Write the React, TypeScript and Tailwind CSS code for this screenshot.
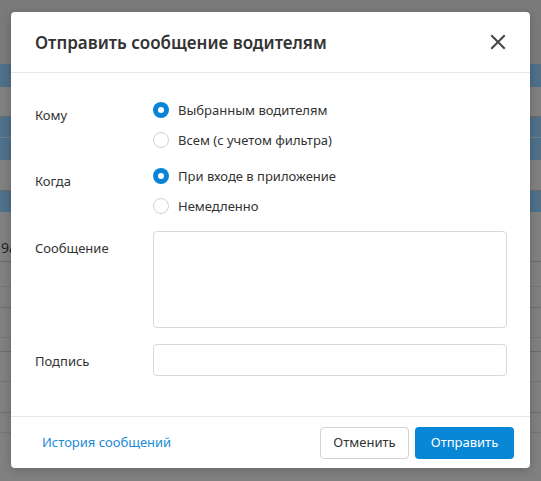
import React from "react";

function Radio({ checked, label }: { checked: boolean; label: string }) {
  return (
    <label className="flex h-5 items-center gap-[9px] text-[13px] leading-5 text-[#333]">
      {checked ? (
        <span className="flex h-4 w-4 items-center justify-center rounded-full bg-[#0a84d6]">
          <span className="h-[6px] w-[6px] rounded-full bg-white" />
        </span>
      ) : (
        <span className="h-4 w-4 rounded-full border border-[#d2d2d2] bg-white" />
      )}
      <span>{label}</span>
    </label>
  );
}

export default function App() {
  return (
    <div
      className="relative h-[481px] w-[541px] overflow-hidden bg-[#808080]"
      style={{ fontFamily: '"Noto Sans", "Open Sans", sans-serif' }}
    >
      {/* dimmed background app */}
      <div className="flex flex-col">
        <div className="h-[64px] bg-[#7a7a7a]" />
        <div className="h-[23px] bg-[#4e7089]" />
        <div className="h-[30px] border-b border-[#6c6c6c] bg-[#808080]" />
        <div className="h-[21px] border-b border-[#6f7f8a] bg-[#4e7089]" />
        <div className="h-[22px] bg-[#4e7089]" />
        <div className="h-[31px] border-b border-[#6c6c6c] bg-[#808080]" />
        <div className="h-[21px] bg-[#4e7089]" />
        <div className="flex h-[50px] items-end border-b border-[#6c6c6c] pb-[3px] text-[14px] text-[#222]">
          <span className="pl-[1px]">9a</span>
        </div>
        <div className="h-[25px] border-b border-[#747474]" />
        <div className="h-[21px] border-b border-[#6c6c6c]" />
        <div className="h-[30px] border-b border-[#747474]" />
        <div className="h-[14px] border-b border-[#6c6c6c]" />
        <div className="h-[30px] border-b border-[#747474]" />
        <div className="h-[31px] border-b border-[#6c6c6c]" />
        <div className="h-[20px] border-b border-[#747474]" />
        <div className="flex h-[30px] items-start">
          <div className="h-full w-[380px] border-r border-[#6c6c6c]" />
          <span className="ml-[17px] mt-[2px] text-[15px] leading-5 text-[#222]">11 минут назад</span>
        </div>
      </div>

      {/* modal */}
      <div className="absolute left-[11px] top-[12px] flex h-[456px] w-[519px] flex-col rounded-[4px] bg-white shadow-[0_2px_10px_rgba(0,0,0,0.2)]">
        <div className="flex h-[61px] items-center justify-between border-b border-[#e8e8e8] pl-6 pr-[20px]">
          <h2 className="pt-[1px] text-[17px] font-semibold leading-6 text-[#333]">
            Отправить сообщение водителям
          </h2>
          <button className="flex h-6 w-6 items-center justify-center text-[#444]" aria-label="close">
            <svg width="16" height="16" viewBox="0 0 16 16" fill="none" stroke="currentColor" strokeWidth="2" strokeLinecap="square">
              <path d="M2 2 L14 14 M14 2 L2 14" />
            </svg>
          </button>
        </div>

        <div className="flex flex-1 flex-col pl-6 pr-[23px] pt-[27px]">
          <div className="flex">
            <div className="w-[118px] pt-[5px] text-[13px] leading-5 text-[#333]">Кому</div>
            <div className="flex flex-col gap-[10px]">
              <Radio checked label="Выбранным водителям" />
              <Radio checked={false} label="Всем (с учетом фильтра)" />
            </div>
          </div>
          <div className="mt-[16px] flex">
            <div className="w-[118px] pt-[5px] text-[13px] leading-5 text-[#333]">Когда</div>
            <div className="flex flex-col gap-[10px]">
              <Radio checked label="При входе в приложение" />
              <Radio checked={false} label="Немедленно" />
            </div>
          </div>
          <div className="mt-[15px] flex">
            <div className="w-[118px] shrink-0 pt-[7px] text-[13px] leading-5 text-[#333]">Сообщение</div>
            <textarea className="h-[97px] flex-1 resize-none rounded-[4px] border border-[#d9d9d9] outline-none" />
          </div>
          <div className="mt-[16px] flex">
            <div className="w-[118px] shrink-0 pt-[7px] text-[13px] leading-5 text-[#333]">Подпись</div>
            <input className="h-[32px] flex-1 rounded-[4px] border border-[#d9d9d9] outline-none" />
          </div>
        </div>

        <div className="flex h-[52px] items-center justify-between border-t border-[#e8e8e8] pl-[31px] pr-[16px]">
          <a className="text-[13px] text-[#1a8ad6]">История сообщений</a>
          <div className="flex gap-[6px]">
            <button className="h-[32px] w-[89px] rounded-[4px] border border-[#d2d2d2] bg-white text-[13px] text-[#333]">
              Отменить
            </button>
            <button className="h-[32px] w-[99px] rounded-[4px] bg-[#0787d6] text-[13px] text-white">
              Отправить
            </button>
          </div>
        </div>
      </div>
    </div>
  );
}
